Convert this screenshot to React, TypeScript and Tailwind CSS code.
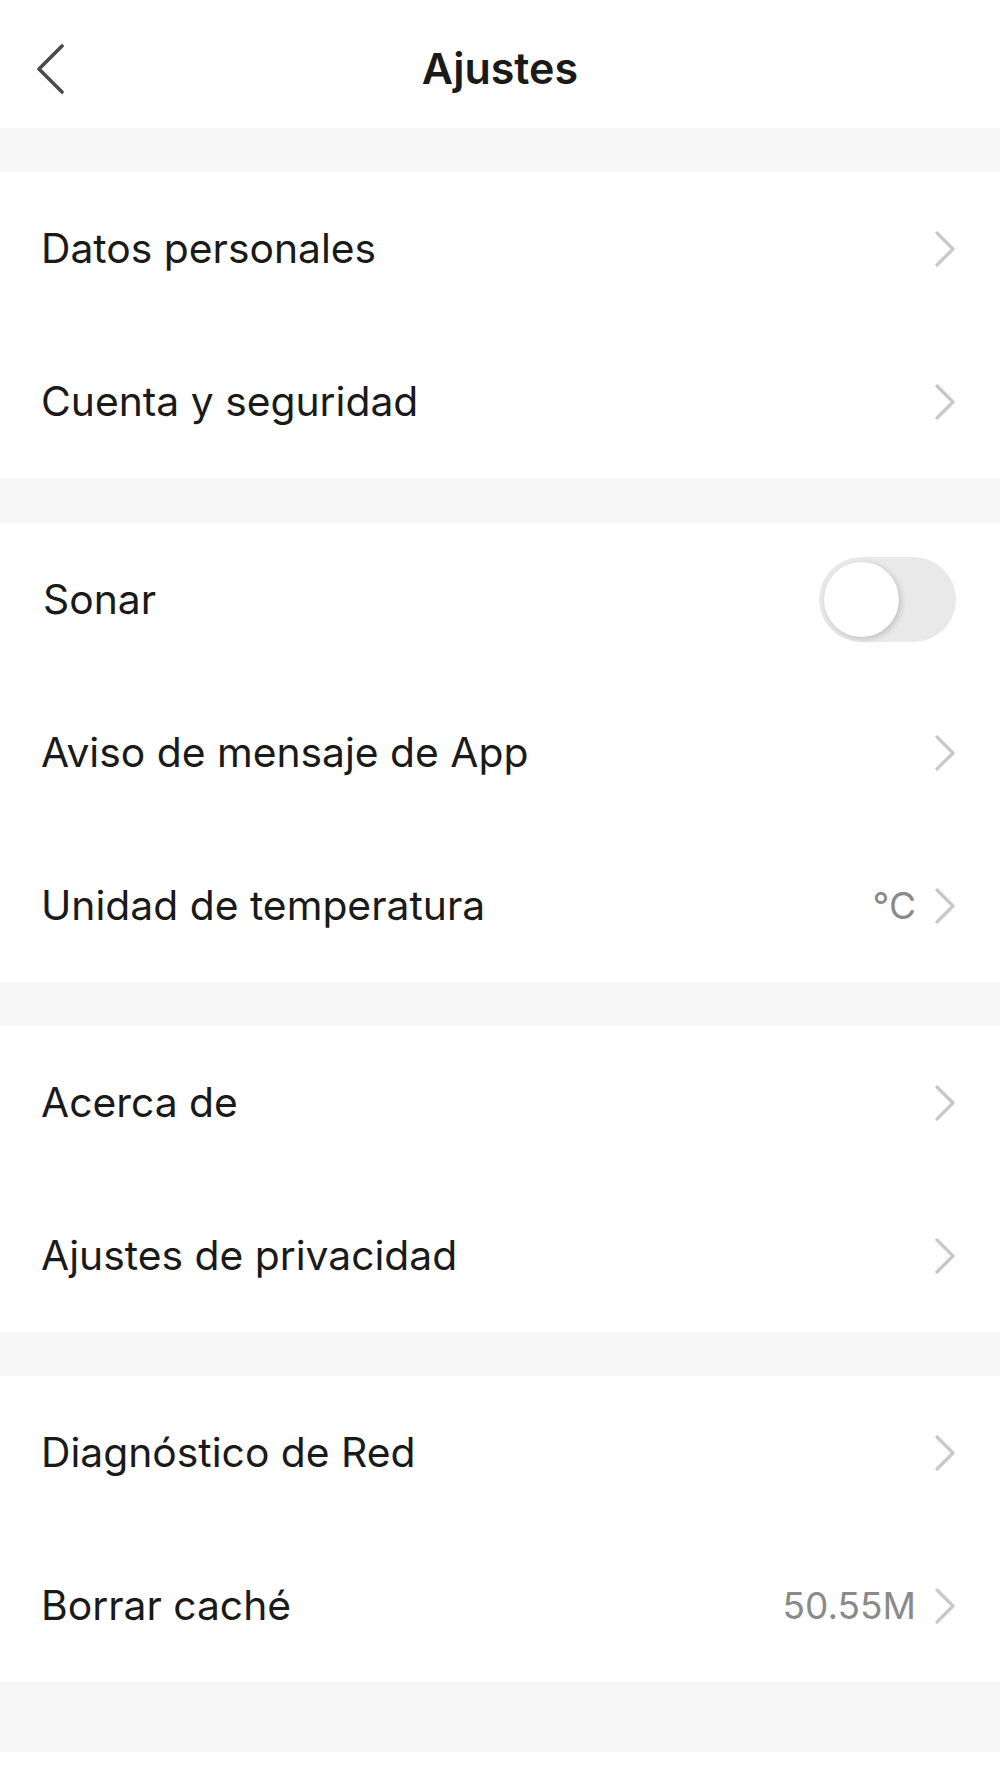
import { useState } from "react";

type RowProps = {
  label: string;
  value?: string;
};

function Chevron() {
  return (
    <svg width="22" height="36" viewBox="0 0 22 36" fill="none" aria-hidden="true">
      <path d="M3 2 L19 18 L3 34" stroke="#c8c8c8" strokeWidth="3.2" strokeLinecap="round" strokeLinejoin="round" />
    </svg>
  );
}

function Row({ label, value }: RowProps) {
  return (
    <div className="flex h-[153px] items-center justify-between pl-[41px] pr-[44px]">
      <span className="text-[40.8px] text-[#1a1a1a]">{label}</span>
      <div className="flex items-center gap-[18px]">
        {value && <span className="text-[37px] text-[#8a8a8a]">{value}</span>}
        <Chevron />
      </div>
    </div>
  );
}

function Toggle() {
  const [on, setOn] = useState(false);
  return (
    <button
      onClick={() => setOn(!on)}
      className={`relative h-[85px] w-[137px] rounded-full ${on ? "bg-[#34c759]" : "bg-[#e9e9e9]"}`}
    >
      <span
        className={`absolute top-[5px] h-[75px] w-[75px] rounded-full bg-white shadow-[2px_2px_6px_rgba(0,0,0,0.18)] ${
          on ? "left-[57px]" : "left-[5px]"
        }`}
      />
    </button>
  );
}

function Gap({ h = "h-[44px]" }: { h?: string }) {
  return <div className={`${h} bg-[#f7f7f7]`} />;
}

export default function App() {
  return (
    <div className="min-h-[1778px] bg-white font-['Inter',sans-serif]">
      <div className="relative flex h-[128px] items-center justify-center pt-[8px]">
        <button className="absolute left-[36px] top-[44px]">
          <svg width="30" height="50" viewBox="0 0 30 50" fill="none">
            <path d="M26 2 L3 25 L26 48" stroke="#4a4a4a" strokeWidth="3.6" strokeLinecap="round" strokeLinejoin="round" />
          </svg>
        </button>
        <h1 className="text-[43px] font-semibold text-[#1a1a1a]">Ajustes</h1>
      </div>

      <Gap />
      <Row label="Datos personales" />
      <Row label="Cuenta y seguridad" />

      <Gap h="h-[45px]" />
      <div className="flex h-[153px] items-center justify-between pl-[43px] pr-[44px]">
        <span className="text-[40.8px] text-[#1a1a1a]">Sonar</span>
        <Toggle />
      </div>
      <Row label="Aviso de mensaje de App" />
      <Row label="Unidad de temperatura" value="°C" />

      <Gap />
      <Row label="Acerca de" />
      <Row label="Ajustes de privacidad" />

      <Gap />
      <Row label="Diagnóstico de Red" />
      <Row label="Borrar caché" value="50.55M" />

      <Gap h="h-[70px]" />
    </div>
  );
}
